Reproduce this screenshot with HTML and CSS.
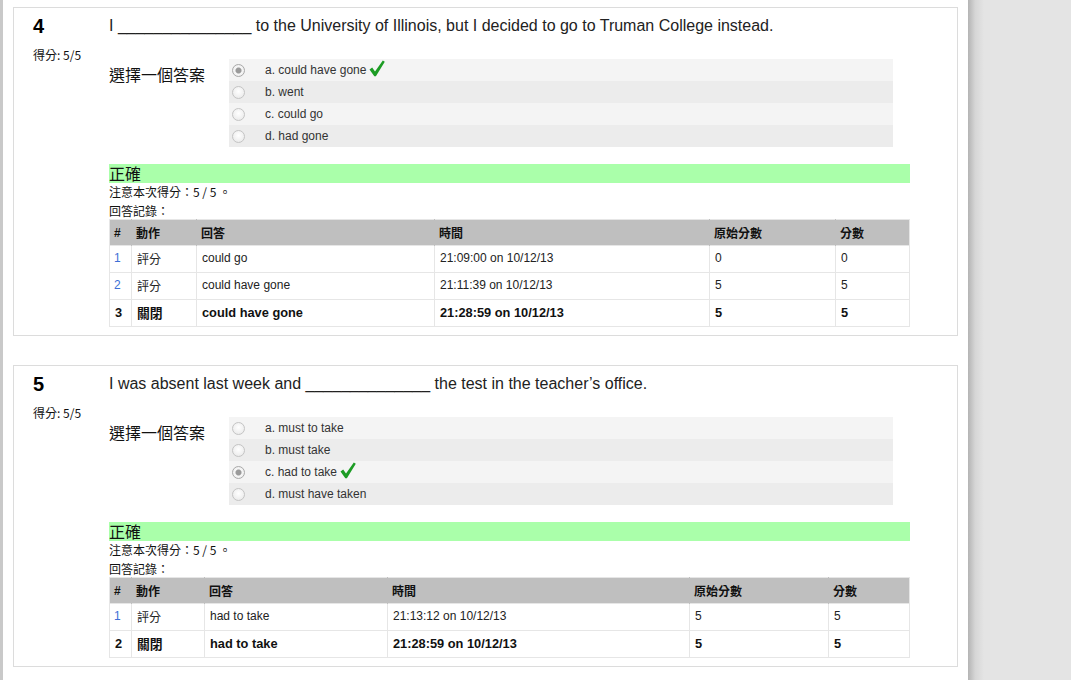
FILE: index.html
```html
<!DOCTYPE html>
<html lang="zh-Hant">
<head>
<meta charset="utf-8">
<title>測驗回顧</title>
<link rel="stylesheet" href="styles.css">
</head>
<body>
<div class="frame">
  <div class="page">
    <div class="que">
      <div class="info">
        <div class="qno">4</div>
        <div class="grade">得分: 5/5</div>
      </div>
      <div class="content">
        <div class="qtext">I _______________ to the University of Illinois, but I decided to go to Truman College instead.</div>
        <div class="ablock">
          <div class="prompt">選擇一個答案</div>
          <div class="answer">
            <div class="opt r0"><span class="radio checked"></span><span class="label">a. could have gone</span><svg class="tick" viewBox="0 0 16 17" width="16" height="17"><path d="M0.5 9.5 L3.2 7.6 L6 11.4 L13.8 0.5 L15.8 1.8 L6.9 16.2 L5.3 16.2 Z" fill="#1c9c24"/></svg></div>
            <div class="opt r1"><span class="radio"></span><span class="label">b. went</span></div>
            <div class="opt r0"><span class="radio"></span><span class="label">c. could go</span></div>
            <div class="opt r1"><span class="radio"></span><span class="label">d. had gone</span></div>
          </div>
        </div>
        <div class="correct">正確</div>
        <div class="note">注意本次得分：5 / 5 。</div>
        <div class="hist">回答記錄：</div>
        <table class="log">
          <colgroup><col class="w22"><col class="w65"><col class="w238"><col class="w275"><col class="w126"><col></colgroup>
          <thead><tr><th>#</th><th>動作</th><th>回答</th><th>時間</th><th>原始分數</th><th>分數</th></tr></thead>
          <tbody>
            <tr><td class="num">1</td><td>評分</td><td>could go</td><td>21:09:00 on 10/12/13</td><td>0</td><td>0</td></tr>
            <tr><td class="num">2</td><td>評分</td><td>could have gone</td><td>21:11:39 on 10/12/13</td><td>5</td><td>5</td></tr>
            <tr class="final"><td>3</td><td>關閉</td><td>could have gone</td><td>21:28:59 on 10/12/13</td><td>5</td><td>5</td></tr>
          </tbody>
        </table>
      </div>
    </div>

    <div class="que">
      <div class="info">
        <div class="qno">5</div>
        <div class="grade">得分: 5/5</div>
      </div>
      <div class="content">
        <div class="qtext">I was absent last week and ______________ the test in the teacher’s office.</div>
        <div class="ablock">
          <div class="prompt">選擇一個答案</div>
          <div class="answer">
            <div class="opt r0"><span class="radio"></span><span class="label">a. must to take</span></div>
            <div class="opt r1"><span class="radio"></span><span class="label">b. must take</span></div>
            <div class="opt r0"><span class="radio checked"></span><span class="label">c. had to take</span><svg class="tick" viewBox="0 0 16 17" width="16" height="17"><path d="M0.5 9.5 L3.2 7.6 L6 11.4 L13.8 0.5 L15.8 1.8 L6.9 16.2 L5.3 16.2 Z" fill="#1c9c24"/></svg></div>
            <div class="opt r1"><span class="radio"></span><span class="label">d. must have taken</span></div>
          </div>
        </div>
        <div class="correct">正確</div>
        <div class="note">注意本次得分：5 / 5 。</div>
        <div class="hist">回答記錄：</div>
        <table class="log">
          <colgroup><col class="w22"><col class="w73"><col class="w183"><col class="w302"><col class="w139"><col></colgroup>
          <thead><tr><th>#</th><th>動作</th><th>回答</th><th>時間</th><th>原始分數</th><th>分數</th></tr></thead>
          <tbody>
            <tr><td class="num">1</td><td>評分</td><td>had to take</td><td>21:13:12 on 10/12/13</td><td>5</td><td>5</td></tr>
            <tr class="final"><td>2</td><td>關閉</td><td>had to take</td><td>21:28:59 on 10/12/13</td><td>5</td><td>5</td></tr>
          </tbody>
        </table>
      </div>
    </div>
  </div>
  <div class="shade"></div>
</div>
</body>
</html>
```

FILE: styles.css
```css
html, body {
  margin: 0;
  padding: 0;
  height: 100%;
  overflow: hidden;
}
body {
  background: #e4e4e4;
  font-family: "Liberation Sans", Arial, "Noto Sans CJK TC", sans-serif;
  color: #222;
}
.frame {
  display: flex;
  height: 100%;
}
.page {
  width: 955px;
  background: #fff;
  border-left: 3px solid #c9c9c9;
  padding: 7px 0 0 10px;
  flex-shrink: 0;
}
.shade {
  width: 16px;
  background: linear-gradient(to right, #b4b4b4, #d6d6d6 45%, #e4e4e4);
  flex-shrink: 0;
}
.que {
  width: 945px;
  border: 1px solid #dcdcdc;
  display: flex;
  padding: 8px 0 8px 19px;
  box-sizing: border-box;
  margin-bottom: 29px;
}
.info {
  width: 76px;
  flex-shrink: 0;
}
.qno {
  font-size: 20px;
  font-weight: bold;
  line-height: 22px;
  margin-top: -1px;
  color: #000;
}
.grade {
  font-size: 12px;
  line-height: 14px;
  margin-top: 11px;
  font-family: "Noto Sans CJK TC", sans-serif;
  color: #111;
}
.content {
  width: 801px;
}
.qtext {
  font-size: 16px;
  line-height: 20px;
  color: #222;
}
.ablock {
  display: flex;
  margin-top: 23px;
}
.prompt {
  width: 120px;
  font-size: 16px;
  line-height: 20px;
  padding-top: 5px;
  font-family: "Noto Sans CJK TC", sans-serif;
  color: #111;
}
.answer {
  width: 664px;
}
.opt {
  height: 22px;
  display: flex;
  align-items: center;
  font-size: 12px;
  color: #333;
}
.r0 { background: #f4f4f4; }
.r1 { background: #ececec; }
.radio {
  width: 11px;
  height: 11px;
  border-radius: 50%;
  border: 1px solid #c4c4c4;
  background: radial-gradient(circle at 50% 40%, #ffffff, #e6e6e6);
  margin-left: 3px;
  margin-right: 20px;
  flex-shrink: 0;
}
.radio.checked {
  background: radial-gradient(circle, #9a9a9a 0 2.5px, #c8c8c8 3px, #f6f6f6 3.6px, #e8e8e8);
  border-color: #a9a9a9;
}
.tick {
  margin-left: 3px;
  margin-top: -3px;
}
.correct {
  margin-top: 17px;
  background: #aaffaa;
  height: 19px;
  line-height: 19px;
  font-size: 16px;
  font-family: "Noto Sans CJK TC", sans-serif;
  color: #111;
}
.note {
  font-size: 12px;
  line-height: 17px;
  font-family: "Noto Sans CJK TC", sans-serif;
  color: #111;
}
.hist {
  font-size: 12px;
  line-height: 17px;
  padding-top: 2px;
  font-family: "Noto Sans CJK TC", sans-serif;
  color: #111;
}
.log {
  width: 801px;
  border-collapse: collapse;
  table-layout: fixed;
  font-size: 12px;
}
.w22 { width: 22px; }
.w65 { width: 65px; }
.w238 { width: 238px; }
.w275 { width: 275px; }
.w126 { width: 126px; }
.w73 { width: 73px; }
.w183 { width: 183px; }
.w302 { width: 302px; }
.w139 { width: 139px; }
.log th {
  background: #bfbfbf;
  height: 25px;
  padding: 0 0 0 4px;
  text-align: left;
  font-weight: bold;
  color: #111;
  border: 1px solid #e6e6e6;
  border-bottom: none;
  border-left-color: #bfbfbf;
  border-right-color: #bfbfbf;
}
.log th:first-child { border-left-color: #e6e6e6; }
.log th:last-child { border-right-color: #e6e6e6; }
.log td {
  height: 24px;
  padding: 0 0 2px 5px;
  border: 1px solid #e6e6e6;
  color: #222;
  white-space: nowrap;
  overflow: hidden;
}
.log td.num {
  color: #3d6fd6;
  padding-left: 4px;
}
.log tr.final td {
  font-weight: bold;
  font-size: 12.8px;
  color: #111;
}
```
